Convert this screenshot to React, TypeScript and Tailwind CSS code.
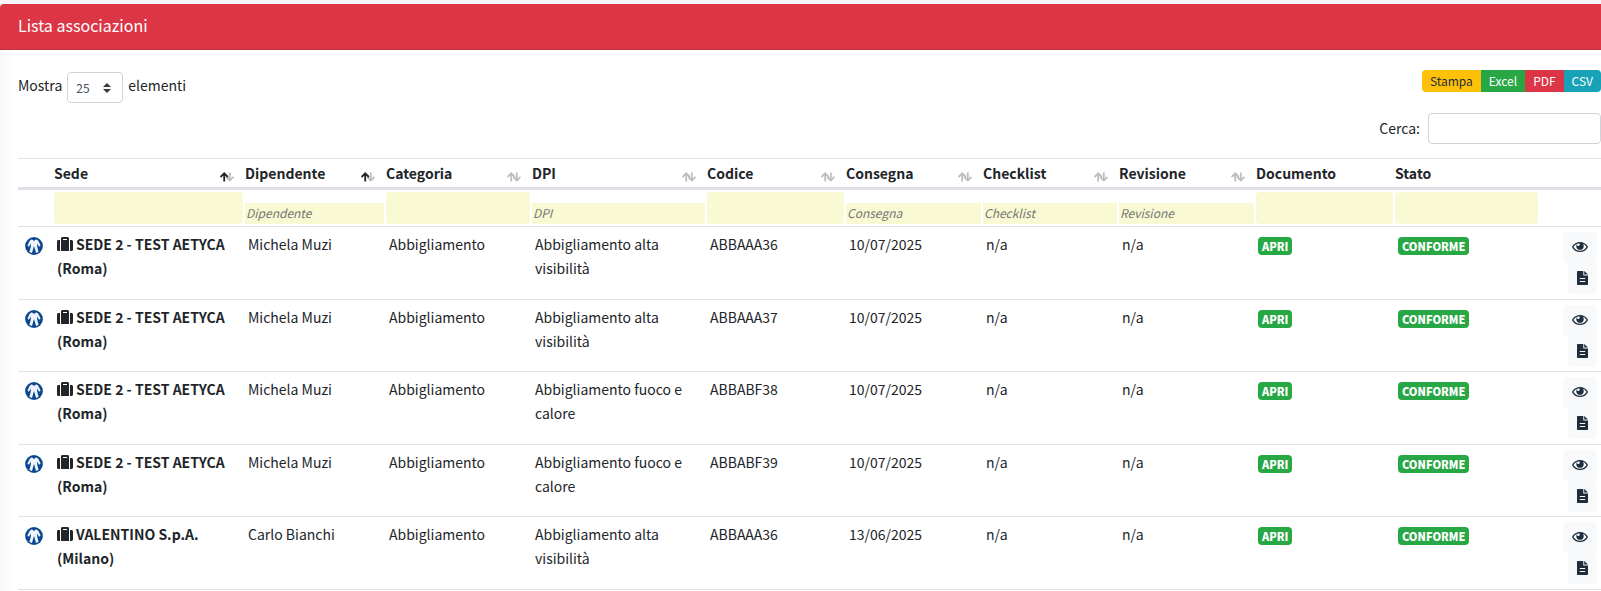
import React from "react";
import { FaSuitcase } from "react-icons/fa";

const FONT = "font-['Noto_Sans_CJK_SC','Noto_Sans',sans-serif]";

type Sort = "none" | "asc" | "both";
type Filter = "none" | "select" | "text";

interface Column {
  label: string;
  width: string;
  sort: Sort;
  filter: Filter;
}

const columns: Column[] = [
  { label: "Sede", width: "w-[191px]", sort: "asc", filter: "select" },
  { label: "Dipendente", width: "w-[141px]", sort: "asc", filter: "text" },
  { label: "Categoria", width: "w-[146px]", sort: "both", filter: "select" },
  { label: "DPI", width: "w-[175px]", sort: "both", filter: "text" },
  { label: "Codice", width: "w-[139px]", sort: "both", filter: "select" },
  { label: "Consegna", width: "w-[137px]", sort: "both", filter: "text" },
  { label: "Checklist", width: "w-[136px]", sort: "both", filter: "text" },
  { label: "Revisione", width: "w-[137px]", sort: "both", filter: "text" },
  { label: "Documento", width: "w-[139px]", sort: "none", filter: "select" },
  { label: "Stato", width: "w-[145px]", sort: "none", filter: "select" },
];

interface Row {
  sede: string;
  dipendente: string;
  dpi: string;
  codice: string;
  consegna: string;
}

const rows: Row[] = [
  { sede: "SEDE 2 - TEST AETYCA (Roma)", dipendente: "Michela Muzi", dpi: "Abbigliamento alta visibilità", codice: "ABBAAA36", consegna: "10/07/2025" },
  { sede: "SEDE 2 - TEST AETYCA (Roma)", dipendente: "Michela Muzi", dpi: "Abbigliamento alta visibilità", codice: "ABBAAA37", consegna: "10/07/2025" },
  { sede: "SEDE 2 - TEST AETYCA (Roma)", dipendente: "Michela Muzi", dpi: "Abbigliamento fuoco e calore", codice: "ABBABF38", consegna: "10/07/2025" },
  { sede: "SEDE 2 - TEST AETYCA (Roma)", dipendente: "Michela Muzi", dpi: "Abbigliamento fuoco e calore", codice: "ABBABF39", consegna: "10/07/2025" },
  { sede: "VALENTINO S.p.A. (Milano)", dipendente: "Carlo Bianchi", dpi: "Abbigliamento alta visibilità", codice: "ABBAAA36", consegna: "13/06/2025" },
];

function SortIcon({ sort }: { sort: Sort }) {
  return (
    <svg viewBox="0 0 14 10" className="mt-2 h-[10px] w-[14px] shrink-0" fill="none" strokeWidth="1.8" aria-hidden="true">
      <path d="M9.8 0.4V8.4M6.1 4.8L9.8 8.5L13.5 4.8" stroke="#bcbebf" />
      <path d="M4.2 9.4V1.4M0.5 5L4.2 1.3L7.9 5" stroke={sort === "asc" ? "#212529" : "#bcbebf"} />
    </svg>
  );
}

function ClothingSign() {
  return (
    <svg viewBox="0 0 18 18" className="h-[18px] w-[18px]" role="img" aria-label="Abbigliamento">
      <circle cx="9" cy="9" r="8.9" fill="#0b4790" />
      <path
        d="M6.2 2.6L8.2 3L9 4.6L9.8 3L11.8 2.6L13.4 4L15.6 8.6L14.2 9.8L12 6.6L12.3 10L13.6 15L11 15.9L9.2 9.6H8.8L7 15.9L4.4 15L5.7 10L6 6.6L3.8 9.8L2.4 8.6L4.6 4Z"
        fill="#eef3f9"
      />
    </svg>
  );
}

function EyeIcon() {
  return (
    <svg viewBox="0 0 576 512" className="h-[14px] w-4" fill="currentColor" aria-hidden="true">
      <path d="M569.354 231.631C512.969 135.949 407.81 72 288 72 168.14 72 63.004 135.994 6.646 231.631a47.999 47.999 0 0 0 0 48.739C63.031 376.051 168.19 440 288 440c119.86 0 224.996-63.994 281.354-159.631a47.997 47.997 0 0 0 0-48.738zM288 392c-102.556 0-192.091-54.701-240-136 44.157-74.933 123.677-127.27 216.162-135.007C273.958 131.078 280 144.83 280 160c0 30.928-25.072 56-56 56s-56-25.072-56-56l.001-.042C157.794 179.043 152 200.844 152 224c0 75.111 60.889 136 136 136s136-60.889 136-136c0-31.031-10.4-59.629-27.895-82.515C451.704 164.638 498.009 205.106 528 256c-47.908 81.299-137.444 136-240 136z" />
    </svg>
  );
}

function SheetIcon() {
  return (
    <svg viewBox="0 0 11 14" className="h-[14px] w-[11px]" aria-hidden="true">
      <path d="M0.7 0H6.3V4.4H11V13.3Q11 14 10.3 14H0.7Q0 14 0 13.3V0.7Q0 0 0.7 0Z" fill="currentColor" />
      <path d="M7.2 0L11 3.6H7.2Z" fill="currentColor" />
      <path d="M2.8 7.5H8.2M2.8 10.5H8.2" stroke="#f8f9fa" strokeWidth="1" />
    </svg>
  );
}

function Badge({ children }: { children: React.ReactNode }) {
  return <span className="block rounded bg-[#28a745] px-1 text-[11px] leading-[18px] font-black text-white">{children}</span>;
}

export default function App() {
  const exportBtn = "h-[22px] px-2 text-[12px] leading-[20px]";
  const cell = "px-1 pt-[5px] align-top leading-6";
  return (
    <div className={`overflow-hidden bg-[#f4f6f9] pt-1 text-[14px] text-[#212529] ${FONT}`}>
      <main className="bg-white">
        <header className="rounded-tl border-b border-[#c1303e] bg-[#dc3545] px-[18px] pb-[3px]">
          <h1 className="text-[16px] leading-[42px] text-white">Lista associazioni</h1>
        </header>
        <div className="bg-linear-to-r from-[#f8f8f8] to-white to-[15px] pl-[18px]">
          <div className="flex items-start justify-between pt-5">
            <label className="flex items-start gap-[5px] leading-[30px]">
              Mostra
              <span className="relative mt-[2px] block">
                <select defaultValue="25" className="block h-[31px] w-[56px] appearance-none rounded border border-[#ced4da] bg-white pl-2 text-[12px] text-[#495057]">
                  <option>10</option>
                  <option>25</option>
                  <option>50</option>
                </select>
                <svg viewBox="0 0 8 10" className="pointer-events-none absolute top-[11px] right-3 h-[10px] w-2" fill="#343a40" aria-hidden="true">
                  <path d="M0 4L4 0L8 4ZM0 6H8L4 10Z" />
                </svg>
              </span>
              elementi
            </label>
            <div className="flex overflow-hidden rounded">
              <button type="button" className={`${exportBtn} bg-[#ffc107] text-[#1f2d3d]`}>Stampa</button>
              <button type="button" className={`${exportBtn} bg-[#28a745] text-white`}>Excel</button>
              <button type="button" className={`${exportBtn} bg-[#dc3545] text-white`}>PDF</button>
              <button type="button" className={`${exportBtn} bg-[#17a2b8] text-white`}>CSV</button>
            </div>
          </div>
          <label className="mt-[10px] mb-[14px] flex h-[31px] items-start justify-end gap-2 leading-[30px]">
            Cerca:
            <input type="search" className="h-[31px] w-[173px] rounded border border-[#ced4da] bg-white px-2 text-[12px]" />
          </label>
          <table className="w-full table-fixed border-separate border-spacing-0">
            <colgroup>
              <col className="w-[35px]" />
              {columns.map((c) => (
                <col key={c.label} className={c.width} />
              ))}
              <col />
            </colgroup>
            <thead>
              <tr className="h-8">
                <th className="border-t border-b-3 border-t-[#dee2e6] border-b-[#dee2e6]" />
                {columns.map((c) => (
                  <th key={c.label} className="border-t border-b-3 border-t-[#dee2e6] border-b-[#dee2e6] p-0 pr-[10px] pl-px text-left font-bold">
                    <span className="flex items-center justify-between leading-7">
                      {c.label}
                      {c.sort !== "none" && <SortIcon sort={c.sort} />}
                    </span>
                  </th>
                ))}
                <th className="border-t border-b-3 border-t-[#dee2e6] border-b-[#dee2e6]" />
              </tr>
              <tr className="h-9">
                <td />
                {columns.map((c) => (
                  <td key={c.label} className="p-px pb-[2px] align-bottom">
                    {c.filter === "select" ? (
                      <select aria-label={c.label} className="block h-8 w-full appearance-none rounded bg-[#f9fad3]">
                        <option></option>
                      </select>
                    ) : (
                      <input
                        aria-label={c.label}
                        placeholder={c.label}
                        className="block h-[21px] w-full bg-[#f9fad3] px-px pb-[2px] text-[12px] placeholder:text-[#757575] placeholder:italic"
                      />
                    )}
                  </td>
                ))}
                <td />
              </tr>
            </thead>
            <tbody>
              {rows.map((r, i) => (
                <tr key={i} className="odd:h-[73px] even:h-[72px] *:border-t *:border-[#dee2e6]">
                  <td className="pt-[10px] pl-[7px] align-top">
                    <ClothingSign />
                  </td>
                  <td className={`${cell} font-bold`}>
                    <FaSuitcase className="mr-[3px] inline-block h-4 w-4 align-[-2px]" />
                    {r.sede}
                  </td>
                  <td className={cell}>{r.dipendente}</td>
                  <td className={cell}>Abbigliamento</td>
                  <td className={cell}>{r.dpi}</td>
                  <td className={cell}>{r.codice}</td>
                  <td className={cell}>{r.consegna}</td>
                  <td className={cell}>n/a</td>
                  <td className={cell}>n/a</td>
                  <td className="px-[3px] pt-[10px] align-top">
                    <div className="flex">
                      <a href="#documento">
                        <Badge>APRI</Badge>
                      </a>
                    </div>
                  </td>
                  <td className="px-1 pt-[10px] align-top">
                    <div className="flex">
                      <Badge>CONFORME</Badge>
                    </div>
                  </td>
                  <td className="pt-[5px] pr-1 align-top">
                    <div className="flex flex-col items-end text-[#1f2d3d]">
                      <button type="button" aria-label="Visualizza" className="flex h-[31px] items-center rounded bg-[#f8f9fa] px-[9px] pb-px">
                        <EyeIcon />
                      </button>
                      <button type="button" aria-label="Scheda" className="flex h-[31px] items-center rounded bg-[#f8f9fa] px-[9px] pb-[2px]">
                        <SheetIcon />
                      </button>
                    </div>
                  </td>
                </tr>
              ))}
            </tbody>
            <tfoot>
              <tr>
                <td colSpan={12} className="h-[2px] border-t border-[#dee2e6] p-0" />
              </tr>
            </tfoot>
          </table>
        </div>
      </main>
    </div>
  );
}
